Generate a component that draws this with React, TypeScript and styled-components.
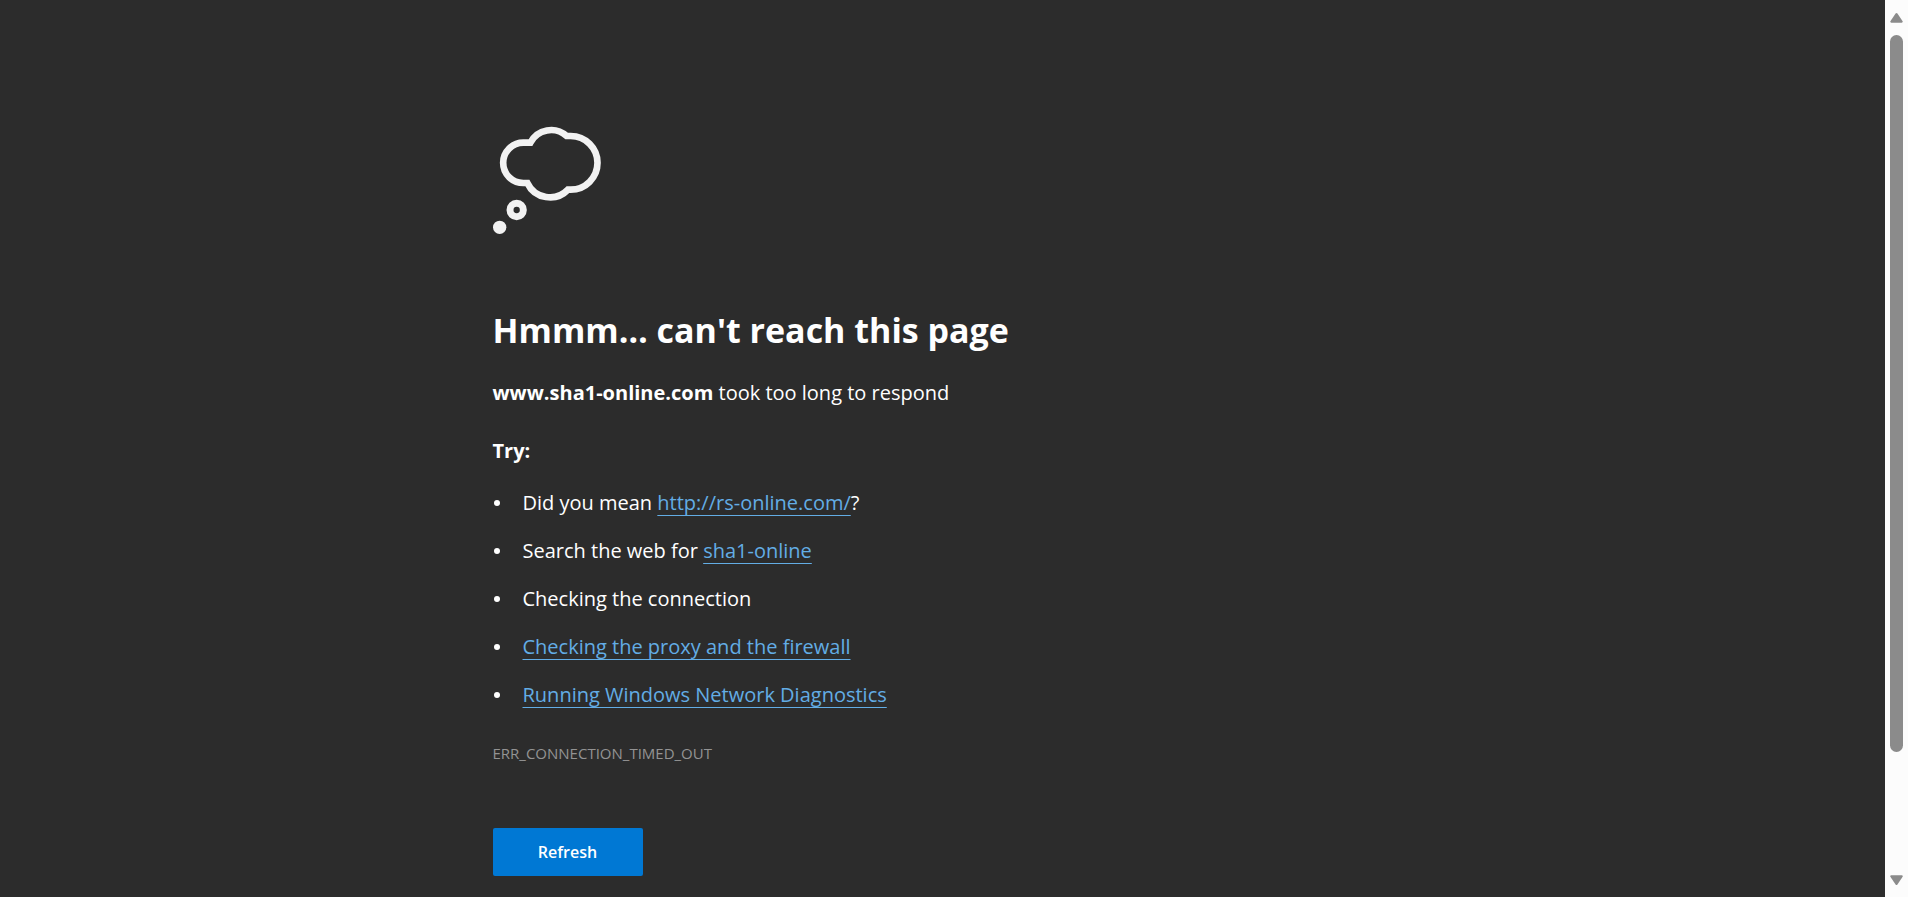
import React from "react";
import styled, { createGlobalStyle } from "styled-components";

const GlobalStyle = createGlobalStyle`
  * { box-sizing: border-box; }
  body {
    margin: 0;
    background: #2c2c2c;
    color: #ffffff;
    font-family: "Segoe UI", "Open Sans", "Noto Sans", sans-serif;
    font-size: 20px;
    line-height: 28px;
  }
`;

const Shell = styled.div`
  display: flex;
  min-height: 100vh;
`;

const Page = styled.main`
  flex: 1;
  min-width: 0;
  padding: 126px 16px 20px;
`;

const Content = styled.div`
  max-width: 900px;
  margin: 0 auto;
`;

const CloudIcon = styled.svg`
  display: block;
  width: 108px;
  height: 108px;
`;

const Title = styled.h1`
  margin: 72px 0 0;
  font-size: 34px;
  line-height: 48px;
  font-weight: 700;
`;

const Summary = styled.p`
  margin: 25px 0 0;
`;

const Host = styled.strong`
  font-weight: 700;
`;

const TryHeading = styled.h2`
  margin: 30px 0 0;
  font-size: 20px;
  line-height: 28px;
  font-weight: 700;
`;

const Tips = styled.ul`
  margin: 24px 0 0;
  padding: 0;
  list-style: none;
  display: grid;
  gap: 20px;
`;

const Tip = styled.li`
  display: flex;
  align-items: center;

  &::before {
    content: "";
    flex: none;
    width: 6px;
    height: 6px;
    margin: 0 23px 0 1px;
    border-radius: 50%;
    background: #ffffff;
  }
`;

const TipLink = styled.a`
  color: #63ade5;
  text-decoration: underline;
  text-decoration-thickness: 1px;
  text-underline-offset: 5px;
  text-decoration-skip-ink: none;
`;

const ErrorCode = styled.p`
  margin: 34px 0 0;
  color: #939393;
  font-size: 15px;
  line-height: 20px;
`;

const RefreshButton = styled.button`
  display: block;
  margin: 65px 0 0;
  width: 150px;
  height: 48px;
  border: 0;
  border-radius: 2px;
  background: #0078d4;
  color: #ffffff;
  font: inherit;
  font-size: 16px;
  line-height: 24px;
  font-weight: 600;
`;

const ScrollTrack = styled.div`
  flex: none;
  width: 23px;
  height: 100vh;
  padding: 12px 5px 11px;
  background: #fcfcfc;
  display: flex;
  flex-direction: column;
  align-items: center;
`;

const Arrow = styled.svg`
  flex: none;
  display: block;
  width: 13px;
  height: 12px;
  fill: #8b8b8b;
`;

const Thumb = styled.div`
  flex: 717 1 0;
  width: 13px;
  margin-top: 11px;
  border-radius: 7px;
  background: #8b8b8b;
`;

const TrackRest = styled.div`
  flex: 122 1 0;
`;

export default function App() {
  return (
    <>
      <GlobalStyle />
      <Shell>
        <Page>
          <Content>
            <CloudIcon viewBox="39 48 324 324" aria-hidden="true">
              <path
                d="M151 98H130A60.500 60.500 0 0 0 130 219H142A75 75 0 0 0 264 239H272A80.500 80.500 0 0 0 272 78H260A70 70 0 0 0 151 98Z"
                fill="none"
                stroke="#f2f2f2"
                strokeWidth="20"
              />
              <circle cx="110" cy="300" r="20" fill="none" stroke="#f2f2f2" strokeWidth="21" />
              <circle cx="59" cy="352" r="20" fill="#f2f2f2" />
            </CloudIcon>
            <Title>Hmmm… can't reach this page</Title>
            <Summary>
              <Host>www.sha1-online.com</Host> took too long to respond
            </Summary>
            <TryHeading>Try:</TryHeading>
            <Tips>
              <Tip>
                <span>
                  Did you mean <TipLink href="http://rs-online.com/">http://rs-online.com/</TipLink>?
                </span>
              </Tip>
              <Tip>
                <span>
                  Search the web for <TipLink href="#search">sha1-online</TipLink>
                </span>
              </Tip>
              <Tip>
                <span>Checking the connection</span>
              </Tip>
              <Tip>
                <TipLink href="#proxy">Checking the proxy and the firewall</TipLink>
              </Tip>
              <Tip>
                <TipLink href="#diagnostics">Running Windows Network Diagnostics</TipLink>
              </Tip>
            </Tips>
            <ErrorCode>ERR_CONNECTION_TIMED_OUT</ErrorCode>
            <RefreshButton type="button">Refresh</RefreshButton>
          </Content>
        </Page>
        <ScrollTrack aria-hidden="true">
          <Arrow viewBox="0 0 14 12">
            <path d="M6 1.2Q7 0 8 1.2L13.6 9.4Q14.2 11 12.6 11H1.4Q-.2 11 .4 9.4Z" />
          </Arrow>
          <Thumb />
          <TrackRest />
          <Arrow viewBox="0 0 14 12">
            <path d="M6 10.8Q7 12 8 10.8L13.6 2.6Q14.2 1 12.6 1H1.4Q-.2 1 .4 2.6Z" />
          </Arrow>
        </ScrollTrack>
      </Shell>
    </>
  );
}
